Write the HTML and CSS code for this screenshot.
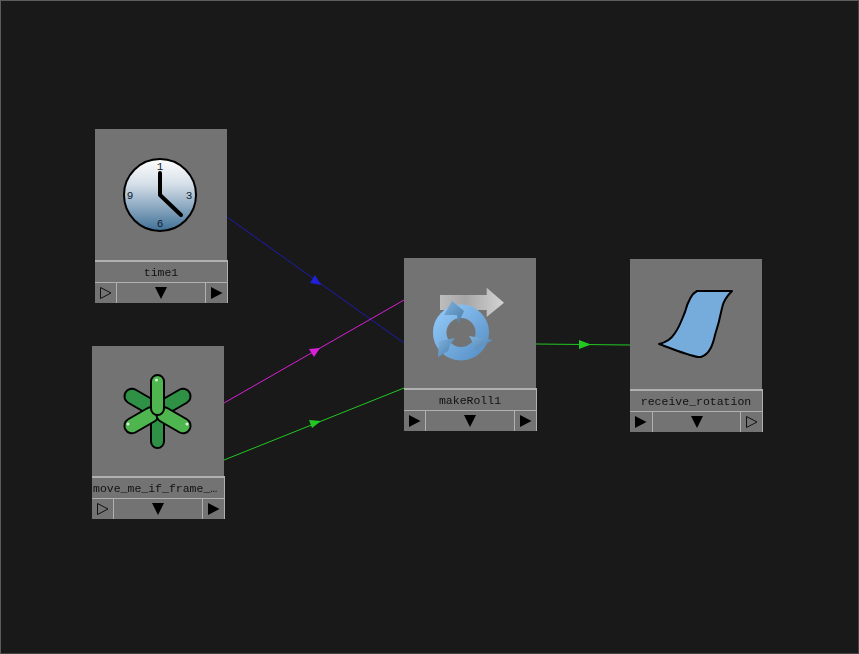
FILE: index.html
```html
<!DOCTYPE html>
<html lang="en">
<head>
    <meta charset="UTF-8">
    <title>Node graph</title>
    <link rel="stylesheet" href="styles.css">
</head>
<body>
    <div class="canvas">
        <svg class="wires" width="857" height="652" viewBox="1 1 857 652">
            <g fill="none" stroke-width="1">
                <line x1="227" y1="217" x2="404" y2="343" stroke="#1c1cb0"/>
                <line x1="224" y1="403" x2="404" y2="300" stroke="#d820d8"/>
                <line x1="224" y1="460" x2="404" y2="388" stroke="#22c822"/>
                <line x1="536" y1="344" x2="630" y2="345" stroke="#22c822"/>
            </g>
            <polygon points="321,285 310,283 315,275" fill="#2020d8"/>
            <polygon points="320,348 314,357 309,349" fill="#d820d8"/>
            <polygon points="321,421 312,428 309,420" fill="#22c822"/>
            <polygon points="591,344.500 579,349 579,340" fill="#22c822"/>
        </svg>

        <div class="node node-time">
            <div class="icon">
                <svg width="76" height="76" viewBox="1 0 76 76">
                    <defs>
                        <linearGradient id="face" x1="0" y1="0" x2="0" y2="1">
                            <stop offset="0" stop-color="#ffffff"/>
                            <stop offset="0.35" stop-color="#d5dfe8"/>
                            <stop offset="1" stop-color="#3f7097"/>
                        </linearGradient>
                    </defs>
                    <circle cx="38" cy="38" r="36" fill="url(#face)" stroke="#000" stroke-width="2"/>
                    <text class="dial" x="38" y="13" text-anchor="middle">1</text>
                    <text class="dial" x="67" y="42" text-anchor="middle">3</text>
                    <text class="dial" x="38" y="70" text-anchor="middle">6</text>
                    <text class="dial" x="8" y="42" text-anchor="middle">9</text>
                    <path d="M38 16V38L59 58" fill="none" stroke="#000" stroke-width="4" stroke-linecap="round" stroke-linejoin="round"/>
                </svg>
            </div>
            <div class="label">time1</div>
            <div class="buttons">
                <span class="btn side"><svg class="tri" width="14" height="14"><polygon points="1.500,1.500 12,7 1.500,12.500" fill="none" stroke="#111"/></svg></span>
                <span class="btn mid"><i class="down"></i></span>
                <span class="btn side"><svg class="tri" width="14" height="14"><polygon points="1,1 12.500,7 1,13" fill="#000"/></svg></span>
            </div>
        </div>

        <div class="node node-move">
            <div class="icon">
                <svg class="free" width="72" height="76" viewBox="0 0 72 76">
                    <g stroke="#000" stroke-width="2" fill="#2f9145">
                        <rect x="29" y="38" width="13" height="37" rx="6.500"/>
                        <rect x="28" y="1" width="15" height="37" rx="7.500" transform="rotate(-60 35.500 38)"/>
                        <rect x="28" y="1" width="15" height="37" rx="7.500" transform="rotate(60 35.500 38)"/>
                    </g>
                    <g stroke="#000" stroke-width="2" fill="#4fb54f">
                        <rect x="28" y="38" width="15" height="37" rx="7.500" transform="rotate(60 35.500 38)"/>
                        <rect x="28" y="38" width="15" height="37" rx="7.500" transform="rotate(-60 35.500 38)"/>
                        <rect x="29" y="2" width="13" height="40" rx="6.500"/>
                    </g>
                    <circle cx="34.500" cy="7" r="1.500" fill="#d8f0d8"/>
                    <circle cx="6" cy="51" r="1.500" fill="#d8f0d8"/>
                    <circle cx="65" cy="51" r="1.500" fill="#d8f0d8"/>
                </svg>
            </div>
            <div class="label label-long">move_me_if_frame_…</div>
            <div class="buttons">
                <span class="btn side"><svg class="tri" width="14" height="14"><polygon points="1.500,1.500 12,7 1.500,12.500" fill="none" stroke="#111"/></svg></span>
                <span class="btn mid"><i class="down"></i></span>
                <span class="btn side"><svg class="tri" width="14" height="14"><polygon points="1,1 12.500,7 1,13" fill="#000"/></svg></span>
            </div>
        </div>

        <div class="node node-roll">
            <div class="icon">
                <svg class="free soft" width="72" height="76" viewBox="0 0 72 76">
                    <defs>
                        <linearGradient id="arrow" x1="0" y1="0" x2="1" y2="0">
                            <stop offset="0" stop-color="#bdbdbd"/>
                            <stop offset="0.4" stop-color="#a6a6a6"/>
                            <stop offset="1" stop-color="#d4d4d4"/>
                        </linearGradient>
                        <linearGradient id="ring" x1="0" y1="0" x2="1" y2="1">
                            <stop offset="0" stop-color="#8fc6f7"/>
                            <stop offset="1" stop-color="#5a93c8"/>
                        </linearGradient>
                        <linearGradient id="head" x1="0" y1="0" x2="1" y2="1">
                            <stop offset="0" stop-color="#7fb2de"/>
                            <stop offset="1" stop-color="#4a7ca8"/>
                        </linearGradient>
                    </defs>
                    <polygon points="6,10 52.700,10 52.700,2.700 70,17.700 52.700,32 52.700,25 6,25" fill="url(#arrow)"/>
                    <circle cx="27" cy="47.500" r="21.300" fill="none" stroke="url(#ring)" stroke-width="13.500"/>
                    <polygon points="18,16 30,26 24,39 23,30 10,30 13,25" fill="url(#head)"/>
                    <polygon points="35,51 59,55 46,62 42,66 40,60" fill="url(#head)"/>
                    <polygon points="4,72 5,56 21,53 16,60 14,66" fill="url(#head)"/>
                </svg>
            </div>
            <div class="label">makeRoll1</div>
            <div class="buttons">
                <span class="btn side"><svg class="tri" width="14" height="14"><polygon points="1,1 12.500,7 1,13" fill="#000"/></svg></span>
                <span class="btn mid"><i class="down"></i></span>
                <span class="btn side"><svg class="tri" width="14" height="14"><polygon points="1,1 12.500,7 1,13" fill="#000"/></svg></span>
            </div>
        </div>

        <div class="node node-receive">
            <div class="icon">
                <svg width="76" height="72" viewBox="0 0 76 72">
                    <path d="M1 56C10 54 14 50 17 45C22 38 24 31 27 24C30 13 33 6 39 3L74 3C68 9 65 14 64 20C62 30 60 38 57 47C55 56 52 66 43 69C36 70 18 62 1 56Z" fill="#76acdc" stroke="#000" stroke-width="2" stroke-linejoin="round"/>
                </svg>
            </div>
            <div class="label">receive_rotation</div>
            <div class="buttons">
                <span class="btn side wide"><svg class="tri" width="14" height="14"><polygon points="1,1 12.500,7 1,13" fill="#000"/></svg></span>
                <span class="btn mid"><i class="down"></i></span>
                <span class="btn side"><svg class="tri" width="14" height="14"><polygon points="1.500,1.500 12,7 1.500,12.500" fill="none" stroke="#111"/></svg></span>
            </div>
        </div>
    </div>
</body>
</html>
```

FILE: styles.css
```css
*{margin:0;padding:0;box-sizing:border-box;}
html,body{width:859px;height:654px;overflow:hidden;background:#191919;}
.canvas{
    position: relative;
    width: 859px;
    height: 654px;
    background: #191919;
    border: 1px solid #5c5c5c;
    border-right-color: #444;
    border-bottom-color: #444;
}
.wires{
    position: absolute;
    left: 0;
    top: 0;
}
.node{
    position: absolute;
    width: 132px;
    height: 173px;
    display: flex;
    flex-direction: column;
    background: #737373;
}
/* offsets are inside the 1px canvas border */
.node-time{left:94px;top:128px;height:174px;}
.node-move{left:91px;top:345px;}
.node-roll{left:403px;top:257px;}
.node-receive{left:629px;top:258px;}
.icon{
    height: 130px;
    flex: none;
    display: flex;
    align-items: center;
    justify-content: center;
}
.node-time .icon{height:131px;}
.free{overflow:visible;}
.soft{filter:blur(0.4px);}
.dial{
    font-family: "Liberation Mono", monospace;
    font-size: 11px;
    fill: #10202c;
}
.label{
    height: 22px;
    margin-right: -1px;
    line-height: 21px;
    border-top: 2px solid #b0b0b0;
    border-right: 1px solid #b0b0b0;
    font-family: "Liberation Mono", monospace;
    font-size: 11.5px;
    color: #111;
    text-align: center;
    white-space: nowrap;
    overflow: hidden;
    will-change: opacity;
}
.label-long{
    text-align: left;
    padding-left: 1px;
}
.buttons{
    flex: 1;
    display: flex;
    margin-right: -1px;
    border-top: 1px solid #b0b0b0;
    border-right: 1px solid #b0b0b0;
}
.btn{
    display: flex;
    align-items: center;
    justify-content: center;
}
.side{width:21px;}
.wide{width:22px;}
.mid{
    flex: 1;
    border-left: 1px solid #b0b0b0;
    border-right: 1px solid #b0b0b0;
}
.down{
    display: block;
    width: 0;
    height: 0;
    border-left: 6px solid transparent;
    border-right: 6px solid transparent;
    border-top: 12px solid #000;
}
```
